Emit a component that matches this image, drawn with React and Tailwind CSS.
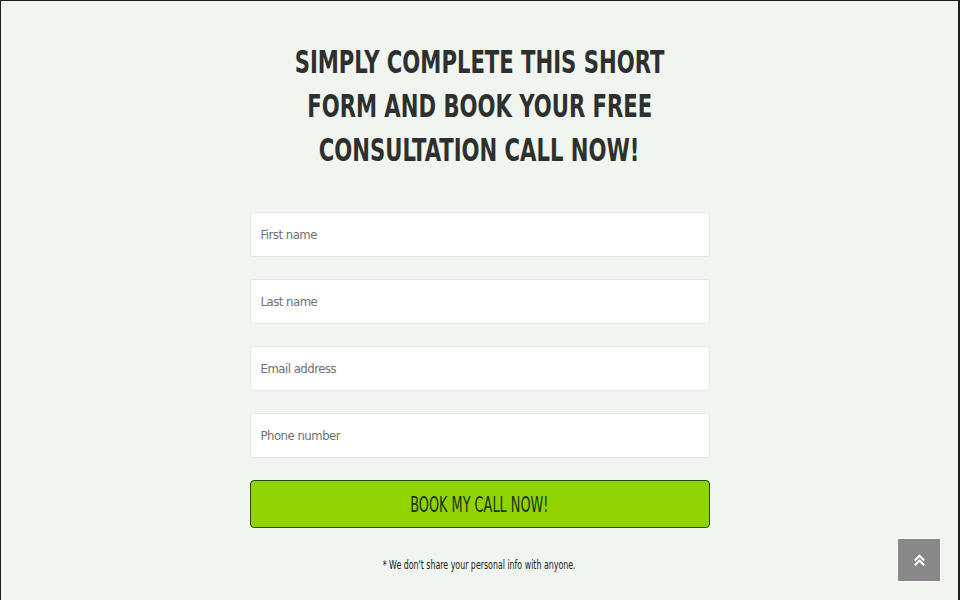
import React from "react";

const condensed = { fontFamily: "'DejaVu Sans Condensed','DejaVu Sans',sans-serif" };

const fields = ["First name", "Last name", "Email address", "Phone number"];

const headingLines = ["Simply complete this short", "form and book your free", "consultation call now!"];

export default function App() {
  return (
    <div
      className="relative h-[600px] w-full overflow-hidden border-l border-r-2 border-t border-[#1c211c] bg-[#f0f5ef]"
      style={condensed}
    >
      <div className="mx-auto flex w-[460px] flex-col items-center pt-[39px]">
        <h1 className="flex flex-col items-center text-[32px] font-bold uppercase leading-[44px] text-[#2e302e]">
          {headingLines.map((l) => (
            <span key={l} className="inline-block scale-x-[0.735] whitespace-nowrap">
              {l}
            </span>
          ))}
        </h1>

        {/* form */}
        <form className="mt-[40px] flex w-full flex-col gap-[22px]">
          {fields.map((f) => (
            <input
              key={f}
              type="text"
              placeholder={f}
              className="h-[45px] w-full rounded-[3px] border border-[#e3e8e2] bg-white px-[10px] text-[13px] tracking-[-0.5px] text-[#555] placeholder-[#6f6f6f] outline-none"
            />
          ))}
          <button
            type="button"
            className="flex h-[48px] w-full items-center justify-center rounded-[4px] border border-[#2f4a10] bg-[#8fd400] text-[22px] uppercase text-[#1f3210]"
          >
            <span className="inline-block scale-x-[0.65] whitespace-nowrap">Book my call now!</span>
          </button>
        </form>

        <p className="mt-[29px] text-[12px] leading-[16px] text-[#222]">
          <span className="inline-block scale-x-[0.73] whitespace-nowrap">
            * We don't share your personal info with anyone.
          </span>
        </p>
      </div>

      {/* scroll to top */}
      <div className="absolute bottom-[18px] right-[17px] flex h-[44px] w-[44px] items-center justify-center border border-white bg-[#888888]">
        <svg width="15" height="15" viewBox="0 0 16 16" fill="none" stroke="white" strokeWidth="2.2">
          <path d="M3 8 L8 3 L13 8" />
          <path d="M3 13 L8 8 L13 13" />
        </svg>
      </div>
    </div>
  );
}
